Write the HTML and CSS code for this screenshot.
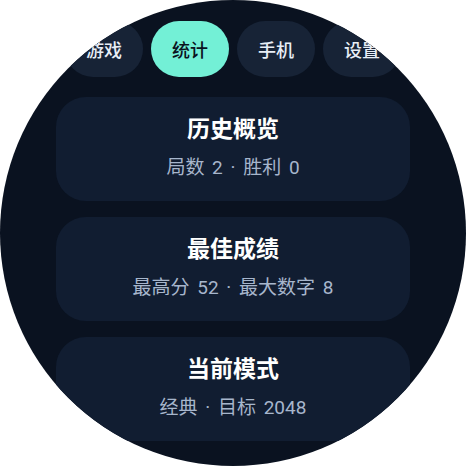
FILE: index.html
```html
<!DOCTYPE html>
<html lang="zh-CN">
<head>
    <meta charset="UTF-8">
    <meta name="viewport" content="width=device-width, initial-scale=1.0">
    <title>统计</title>
    <link rel="stylesheet" href="styles.css">
</head>
<body>
    <div class="watch">
        <div class="tabs">
            <div class="tab">游戏</div>
            <div class="tab active">统计</div>
            <div class="tab">手机</div>
            <div class="tab">设置</div>
        </div>

        <div class="cards">
            <div class="card">
                <div class="card-title">历史概览</div>
                <div class="card-sub">局数 2 · 胜利 0</div>
            </div>
            <div class="card">
                <div class="card-title">最佳成绩</div>
                <div class="card-sub">最高分 52 · 最大数字 8</div>
            </div>
            <div class="card">
                <div class="card-title">当前模式</div>
                <div class="card-sub">经典 · 目标 2048</div>
            </div>
        </div>
    </div>
</body>
</html>
```

FILE: styles.css
```css
body {
    margin: 0;
    background: #ffffff;
    font-family: Roboto, "Noto Sans CJK SC", sans-serif;
}
.watch {
    width: 466px;
    height: 466px;
    border-radius: 50%;
    overflow: hidden;
    background: #0a1220;
}
.tabs {
    display: flex;
    gap: 8px;
    padding: 21px 0 0 65px;
}
.tab {
    flex: 0 0 78px;
    height: 56px;
    border-radius: 28px;
    background: #172336;
    color: #e8eef6;
    font-size: 18px;
    font-weight: 500;
    display: flex;
    align-items: center;
    justify-content: center;
}
.tab.active {
    background: #73f0d6;
    color: #0a1220;
}
.cards {
    display: flex;
    flex-direction: column;
    gap: 16px;
    margin: 20px 56px 0;
}
.card {
    height: 104px;
    box-sizing: border-box;
    padding-top: 17px;
    border-radius: 30px;
    background: #111d31;
    text-align: center;
}
.card-title {
    color: #ffffff;
    font-size: 23px;
    font-weight: bold;
    line-height: 32px;
}
.card-sub {
    margin-top: 9px;
    color: #a7b6cc;
    font-size: 19px;
    line-height: 26px;
    word-spacing: 3px;
}
```
